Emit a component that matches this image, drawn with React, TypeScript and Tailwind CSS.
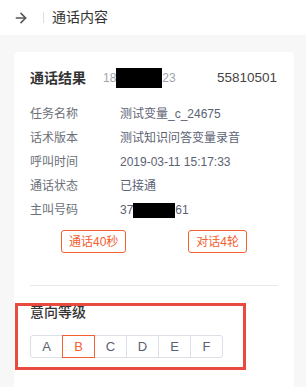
import React from 'react'
import { ArrowRight } from 'lucide-react'

const font = { fontFamily: '"Liberation Sans", "Noto Sans CJK SC", sans-serif' }

const rows: { label: string; value: React.ReactNode }[] = [
    { label: '任务名称', value: '测试变量_c_24675' },
    { label: '话术版本', value: '测试知识问答变量录音' },
    { label: '呼叫时间', value: '2019-03-11 15:17:33' },
    { label: '通话状态', value: '已接通' },
    {
        label: '主叫号码',
        value: (
            <span className="flex items-center">
                37<span className="inline-block w-[42px] h-[15px] bg-black" />61
            </span>
        )
    }
]

const grades = ['A', 'B', 'C', 'D', 'E', 'F']

export default function App() {
    return (
        <div className="relative w-[306px] h-[387px] overflow-hidden bg-[#f7f7f7]" style={font}>
            {/* top bar */}
            <div className="h-[35px] bg-white flex items-center pl-[13px]">
                <ArrowRight size={16} strokeWidth={2.4} className="text-[#555]" />
                <span className="ml-[14px] w-px h-[11px] bg-[#ddd]" />
                <span className="ml-2 text-[14px] text-[#333]">通话内容</span>
            </div>

            {/* card */}
            <div className="ml-[14px] mt-[17px] w-[280px] h-[340px] bg-white rounded-[4px] pt-4 px-4">
                <div className="h-5 flex items-center">
                    <span className="text-[14px] font-bold text-[#333] w-[73px]">通话结果</span>
                    <span className="flex items-center text-[12px] text-[#a0a4ae]">
                        18<span className="inline-block w-[46px] h-5 bg-black" />23
                    </span>
                    <span className="ml-auto mr-[1px] text-[13.5px] text-[#444]">55810501</span>
                </div>

                <div className="mt-[14px]">
                    {rows.map((r) => (
                        <div key={r.label} className="h-6 flex items-center text-[12px]">
                            <span className="w-[90px] text-[#6b6f78]">{r.label}</span>
                            <span className="text-[#5c6274]">{r.value}</span>
                        </div>
                    ))}
                </div>

                <div className="mt-2 flex justify-around">
                    <span className="h-[23px] px-[7px] flex items-center border border-[#f4602f] rounded-[3px] text-[12px] text-[#f4602f]">通话40秒</span>
                    <span className="h-[23px] px-[7px] flex items-center border border-[#f4602f] rounded-[3px] text-[12px] text-[#f4602f]">对话4轮</span>
                </div>

                <div className="mt-8 h-px bg-[#e8e8e8]" />

                <div className="mt-4 h-5 flex items-center text-[14px] font-medium text-[#333]">意向等级</div>

                <div className="mt-[13px] flex">
                    {grades.map((g, i) => (
                        <span
                            key={g}
                            className={
                                'w-[33px] h-[23px] flex items-center justify-center text-[13px] border ' +
                                (g === 'B'
                                    ? 'border-[#f4602f] text-[#f4602f] relative z-10'
                                    : 'border-[#dcdfe6] text-[#5a6072]') +
                                (i > 0 ? ' -ml-px' : ' rounded-l-[3px]') +
                                (i === grades.length - 1 ? ' rounded-r-[3px]' : '')
                            }
                        >
                            {g}
                        </span>
                    ))}
                </div>
            </div>

            {/* highlight annotation */}
            <div className="absolute left-[15px] top-[303px] w-[231px] h-[67px] border-[3px] border-[#e84a3f] pointer-events-none" />
        </div>
    )
}
